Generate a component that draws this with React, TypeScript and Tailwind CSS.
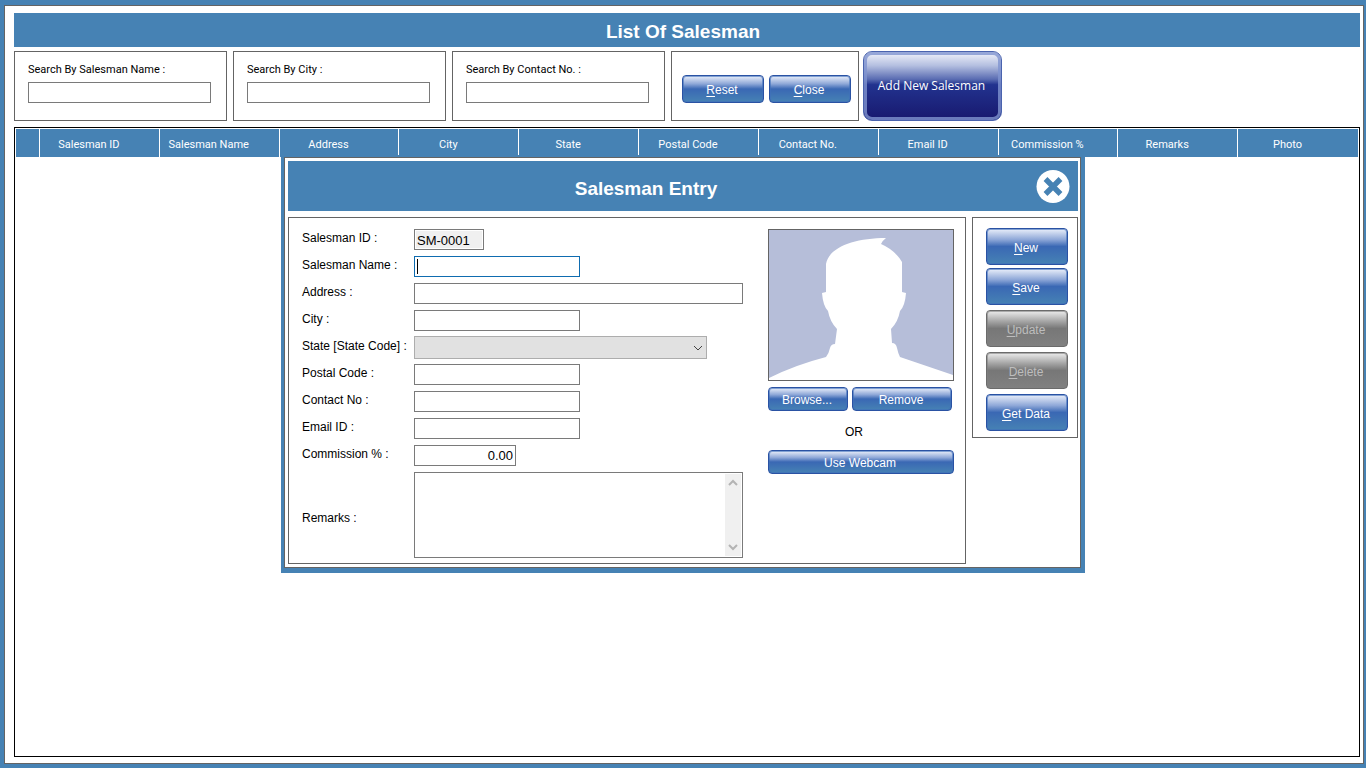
import { useState } from "react";

const COLUMNS = [
  "Salesman ID",
  "Salesman Name",
  "Address",
  "City",
  "State",
  "Postal Code",
  "Contact No.",
  "Email ID",
  "Commission %",
  "Remarks",
  "Photo",
];

const SEARCHES = [
  ["search-name", "Search By Salesman Name :"],
  ["search-city", "Search By City :"],
  ["search-contact", "Search By Contact No. :"],
] as const;

const INPUT = "h-[21px] border border-[#7a7a7a] bg-white px-[2px] text-[13px] outline-none";

function GlossButton({ label, hotkey, disabled, className }: {
  label: string;
  hotkey?: boolean;
  disabled?: boolean;
  className: string;
}) {
  const tone = disabled
    ? "border-[#6b6b6b] text-[#bdbdbd] inset-ring-[#808080]/60 bg-[linear-gradient(#ececec,#a4a4a4_30%,#777777_50%,#808080)]"
    : "border-[#2a52a3] text-white inset-ring-[#3f6fba]/60 bg-[linear-gradient(#eaeffa,#8fa8d8_30%,#3a68b4_50%,#4682b4)]";
  return (
    <button type="button" disabled={disabled}
      className={`rounded-[4px] border pt-[2px] pr-[2px] text-[12px] leading-4 inset-ring ${tone} ${className}`}>
      {hotkey ? (
        <>
          <span className="underline underline-offset-2">{label[0]}</span>
          {label.slice(1)}
        </>
      ) : label}
    </button>
  );
}

function Field({ id, label, children }: { id: string; label: string; children: React.ReactNode }) {
  return (
    <div className="flex h-[21px] items-center">
      <label htmlFor={id} className="w-28 shrink-0 pb-1 whitespace-nowrap">{label}</label>
      {children}
    </div>
  );
}

function Chevron({ up, className }: { up?: boolean; className: string }) {
  return (
    <svg viewBox="0 0 10 10" className={className} fill="none" stroke="currentColor">
      <path d={up ? "M1 7 L5 3 L9 7" : "M1 3 L5 7 L9 3"} />
    </svg>
  );
}

function Avatar() {
  return (
    <svg viewBox="0 0 184 150" className="h-[152px] w-[186px] border border-[#646464] bg-[#b6bed9]"
      preserveAspectRatio="none" role="img" aria-label="Photo">
      <path fill="#fff" d="M0 148 Q26 135 57 127 Q60 123 61 118 Q62 114 66 114 L68 99 Q61 92 59 81 Q54 76 53 63 L57 62 L57 34 C60 17 86 8 117 8 Q113 11 112 14 Q126 20 133 32 L133 62 L137 63 Q136 76 131 81 Q129 92 122 99 L123 113 Q127 113 128 118 Q129 123 131 127 L184 145 L184 150 L0 150 Z" />
    </svg>
  );
}

function SalesmanEntry({ onClose }: { onClose: () => void }) {
  const [name, setName] = useState("");

  return (
    <section className="w-[804px] border-t-2 border-r-4 border-b-[5px] border-l-[3px] border-[#4682b4] bg-[#646464] p-px text-[12px] leading-4">
      <div className="bg-white py-[3px] pr-[2px] pl-[3px]">
        <header className="flex h-[50px] items-center bg-[#4682b4] text-white">
          <h2 className="flex-1 pt-[6px] text-center text-[19px] leading-6 font-bold">Salesman Entry</h2>
          <button type="button" aria-label="Close entry" onClick={onClose} className="mr-2 ml-8">
            <svg viewBox="0 0 34 34" className="size-[34px]">
              <circle cx="17" cy="17.5" r="16.5" fill="#fff" />
              <path d="M9.5 10 L24.5 25 M24.5 10 L9.5 25" stroke="#4682b4" strokeWidth="5.4" />
            </svg>
          </button>
        </header>

        <div className="mt-[6px] flex items-start gap-[6px]">
          <div className="flex flex-1 items-start justify-between border border-[#646464] pt-[11px] pr-[11px] pb-[5px] pl-[13px]">
            <form className="flex flex-col gap-[6px]">
              <Field id="sm-id" label="Salesman ID :">
                <input id="sm-id" readOnly value="SM-0001"
                  className="h-[21px] w-[70px] border border-[#7a7a7a] bg-[#f0f0f0] px-[2px] pt-[2px] text-[13px] inset-ring inset-ring-white outline-none" />
              </Field>
              <Field id="sm-name" label="Salesman Name :">
                <div className="relative flex">
                  <input id="sm-name" value={name} onChange={(e) => setName(e.target.value)}
                    className="h-[21px] w-[166px] border border-[#0f6cb0] bg-white px-[2px] caret-transparent outline-none" />
                  {/* text cursor */}
                  {!name && <span className="absolute top-[3px] left-[3px] h-[15px] w-px bg-black" />}
                </div>
              </Field>
              <Field id="sm-address" label="Address :">
                <input id="sm-address" className={`${INPUT} w-[329px]`} />
              </Field>
              <Field id="sm-city" label="City :">
                <input id="sm-city" className={`${INPUT} w-[166px]`} />
              </Field>
              <Field id="sm-state" label="State [State Code] :">
                <div className="relative flex">
                  <select id="sm-state" className="h-[23px] w-[293px] appearance-none border border-[#adadad] bg-[#e1e1e1]">
                    <option value="" />
                  </select>
                  <Chevron className="pointer-events-none absolute top-[7px] right-1 size-[10px] text-[#444]" />
                </div>
              </Field>
              <Field id="sm-postal" label="Postal Code :">
                <input id="sm-postal" className={`${INPUT} w-[166px]`} />
              </Field>
              <Field id="sm-contact" label="Contact No :">
                <input id="sm-contact" className={`${INPUT} w-[166px]`} />
              </Field>
              <Field id="sm-email" label="Email ID :">
                <input id="sm-email" className={`${INPUT} w-[166px]`} />
              </Field>
              <Field id="sm-commission" label="Commission % :">
                <input id="sm-commission" defaultValue="0.00" className={`${INPUT} w-[102px] text-right`} />
              </Field>
              <div className="flex items-center">
                <label htmlFor="sm-remarks" className="w-28 pt-[6px]">Remarks :</label>
                <div className="flex h-[86px] w-[329px] border border-[#7a7a7a] p-px">
                  <textarea id="sm-remarks" className="flex-1 resize-none outline-none" />
                  <div className="flex w-4 flex-col items-center justify-between bg-[#f0f0f0] py-1 text-[#b4b4b4]">
                    <Chevron up className="size-[10px] stroke-2" />
                    <Chevron className="size-[10px] stroke-2" />
                  </div>
                </div>
              </div>
            </form>

            <div className="w-[186px]">
              <Avatar />
              <div className="mt-[6px] flex gap-1">
                <GlossButton label="Browse..." className="h-6 w-20" />
                <GlossButton label="Remove" className="h-6 w-[100px]" />
              </div>
              <p className="mt-[13px] mb-[10px] pr-[14px] text-center">OR</p>
              <GlossButton label="Use Webcam" className="h-6 w-full" />
            </div>
          </div>

          <div className="flex flex-col gap-[5px] border border-[#646464] pt-[10px] pr-[9px] pb-[6px] pl-[13px]">
            <div className="flex flex-col gap-[3px]">
              <GlossButton hotkey label="New" className="h-[37px] w-[82px]" />
              <GlossButton hotkey label="Save" className="h-[37px] w-[82px]" />
            </div>
            <GlossButton hotkey disabled label="Update" className="h-[37px] w-[82px]" />
            <GlossButton hotkey disabled label="Delete" className="h-[37px] w-[82px]" />
            <GlossButton hotkey label="Get Data" className="h-[37px] w-[82px]" />
          </div>
        </div>
      </div>
    </section>
  );
}

export default function App() {
  const [entryOpen, setEntryOpen] = useState(true);

  return (
    <div className="relative flex min-h-screen flex-col border-t-[5px] border-r-2 border-b-4 border-l-4 border-[#4682b4] bg-[#646464] p-px font-['Liberation_Sans',sans-serif] text-black">
      <main className="flex flex-1 flex-col bg-white pt-[7px] pr-[3px] pb-[6px] pl-[9px]">
        <h1 className="h-[34px] bg-[#4682b4] pt-[3px] pr-2 text-center text-[19px] leading-8 font-bold text-white">
          List Of Salesman
        </h1>

        <div className="mt-1 flex h-[70px] gap-[6px]">
          {SEARCHES.map(([id, label]) => (
            <div key={id} className="w-[213px] border border-[#646464] px-[13px] pt-[10px]">
              <label htmlFor={id} className="block font-[Roboto,sans-serif] text-[11px] leading-4">{label}</label>
              <input id={id} className={`${INPUT} mt-1 block w-[183px]`} />
            </div>
          ))}
          <div className="flex gap-1">
            <div className="flex gap-[5px] border border-[#646464] px-[10px] pt-[23px] pr-[7px]">
              <GlossButton hotkey label="Reset" className="h-7 w-[82px]" />
              <GlossButton hotkey label="Close" className="h-7 w-[82px]" />
            </div>
            <button type="button" onClick={() => setEntryOpen(true)}
              className="w-[139px] rounded-[9px] border border-[#4a63ae] bg-[linear-gradient(#f2f4fb,#b4bfe0_20%,#5a6cb2_40%,#22338f_48%,#18186e)] pr-[2px] font-['Open_Sans',sans-serif] text-[12px] text-white inset-ring-3 inset-ring-[#8094cf]/80">
              Add New Salesman
            </button>
          </div>
        </div>

        <div className="mt-[6px] flex-1 border border-black p-px">
          <table className="w-full table-fixed border-separate border-spacing-0 bg-[#4682b4] font-[Roboto,sans-serif] text-[11px] leading-4 text-white">
            <thead>
              <tr className="h-7">
                <th className="w-6 border-r border-white p-0" />
                {COLUMNS.map((c) => (
                  <th key={c} className="border-r border-white p-0 pt-1 pr-[21px] text-center font-normal last:border-r-0">{c}</th>
                ))}
              </tr>
            </thead>
          </table>
        </div>
      </main>

      {entryOpen && (
        <div className="absolute inset-x-0 top-[150px] -mr-[2px] -ml-1 flex justify-center">
          <SalesmanEntry onClose={() => setEntryOpen(false)} />
        </div>
      )}
    </div>
  );
}
